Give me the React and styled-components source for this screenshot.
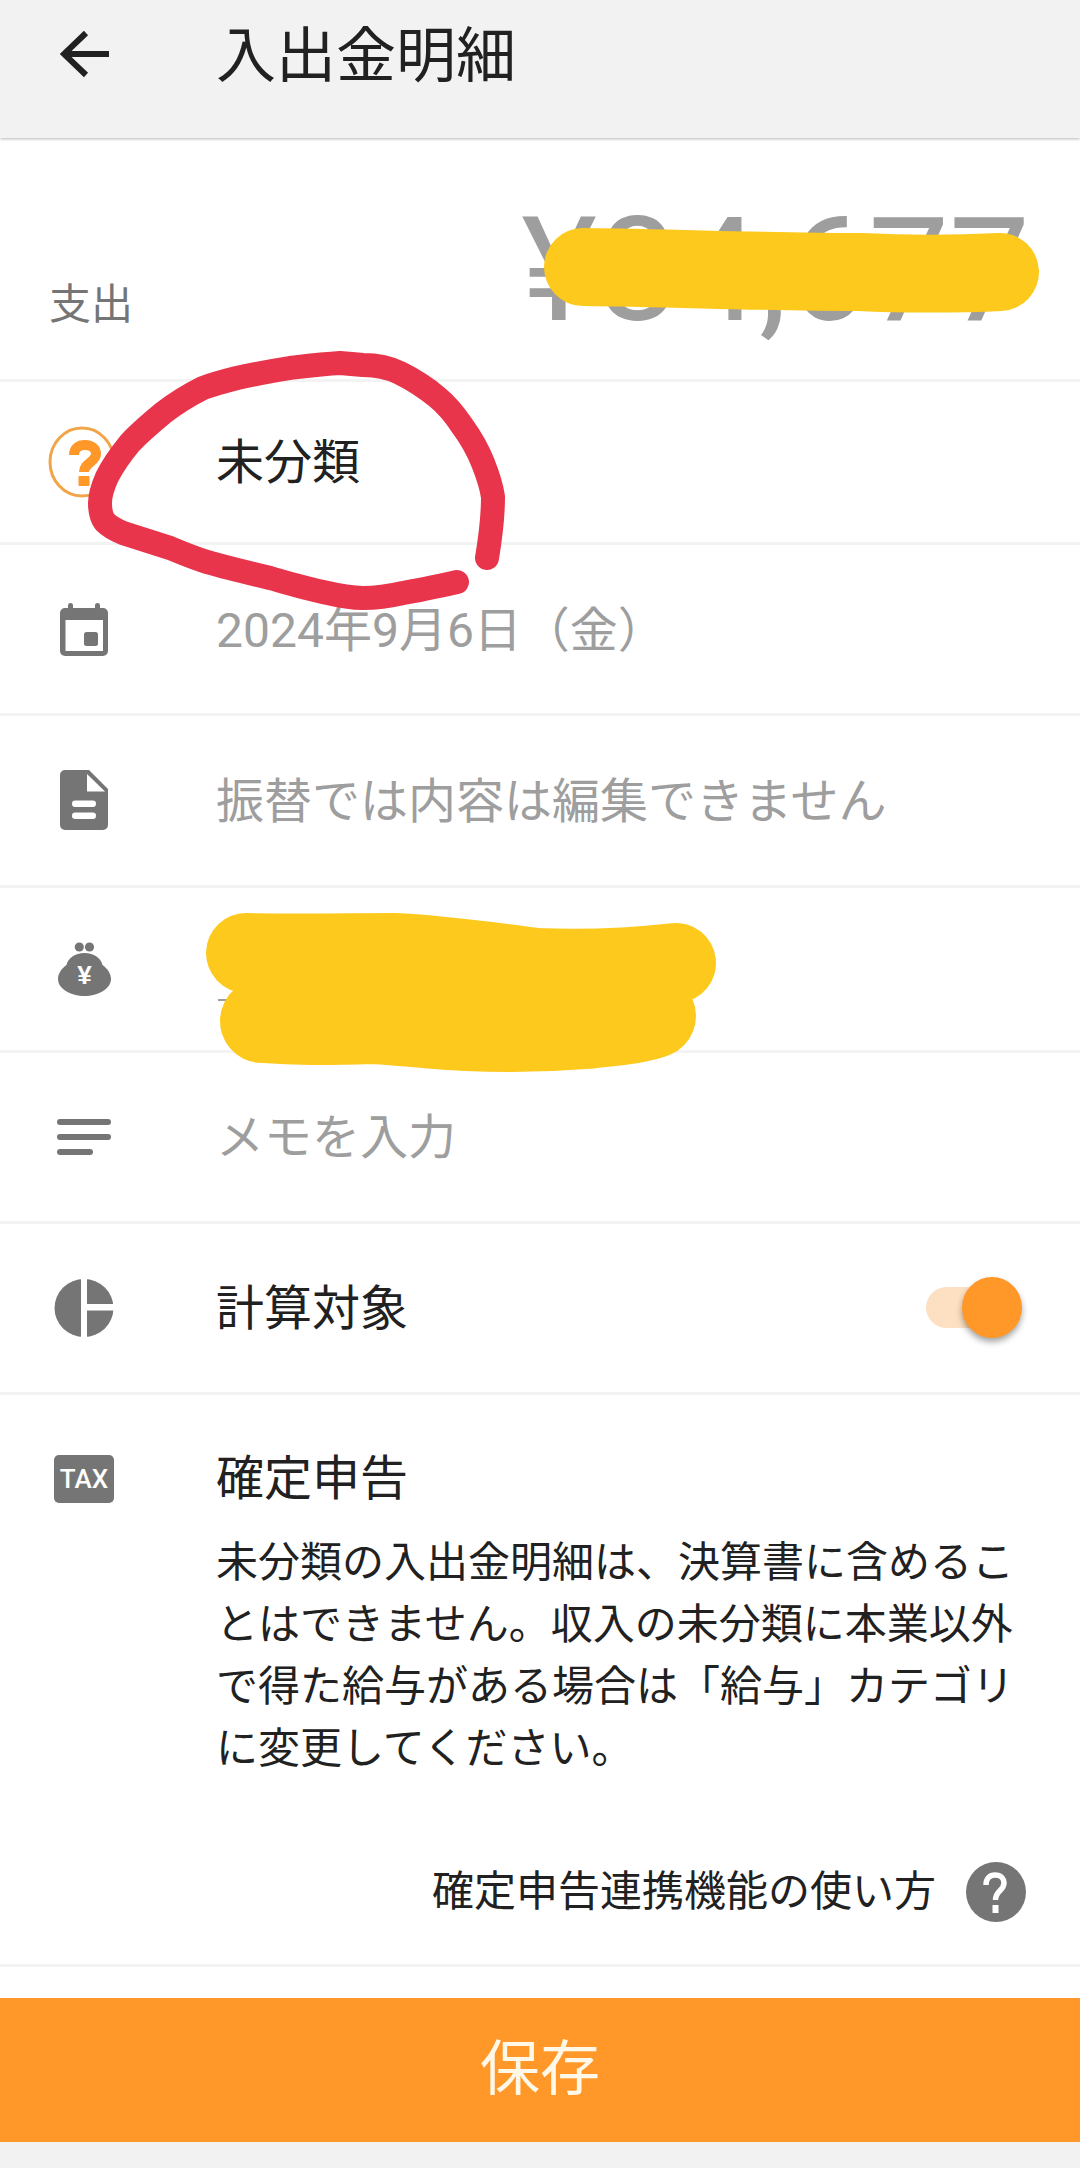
import React from "react";
import styled, { createGlobalStyle } from "styled-components";

const GRAY = "#757575";
const ORANGE = "#ff9828";
const FONT = `Roboto, "Noto Sans CJK JP", sans-serif`;

const Global = createGlobalStyle`
  html, body { margin: 0; padding: 0; background: #f2f2f2; }
  * { box-sizing: border-box; }
`;

const Page = styled.div`
  position: relative;
  width: 1080px;
  height: 2168px;
  overflow: hidden;
  display: flex;
  flex-direction: column;
  background: #f2f2f2;
  font-family: ${FONT};
  text-spacing-trim: space-all;
  color: #212121;
`;

const Header = styled.header`
  position: relative;
  z-index: 1;
  height: 138px;
  flex: none;
  display: flex;
  align-items: flex-start;
  background: #f2f2f2;
  box-shadow: 0 1px 3px rgba(0, 0, 0, 0.28);
`;

const BackSlot = styled.div`
  width: 216px;
  height: 108px;
  padding-left: 60px;
  display: flex;
  align-items: center;
`;

const Title = styled.h1`
  margin: 0;
  font-size: 60px;
  font-weight: 400;
  line-height: 114px;
`;

const Sheet = styled.main`
  height: 2004px;
  flex: none;
  display: flex;
  flex-direction: column;
  background: #fff;
`;

const AmountRow = styled.section`
  height: 243.5px;
  flex: none;
  display: flex;
  justify-content: space-between;
  align-items: flex-end;
  padding: 0 50px 46px 49px;
  border-bottom: 3px solid #f3f3f3;
`;

const AmountLabel = styled.span`
  font-size: 42px;
  line-height: 56px;
  color: ${GRAY};
`;

const Amount = styled.span`
  font-size: 144px;
  line-height: 144px;
  color: #9e9e9e;
  margin-bottom: -10px;
`;

const Row = styled.section`
  height: ${(p) => p.$h}px;
  flex: none;
  display: flex;
  align-items: center;
  border-bottom: 3px solid #f3f3f3;
`;

const IconSlot = styled.div`
  width: 168px;
  margin-right: 48px;
  padding-right: ${(p) => p.$inset || 0}px;
  flex: none;
  display: flex;
  justify-content: center;
  align-items: center;
`;

const RowText = styled.span`
  flex: 1;
  padding-top: 3px;
  font-size: 48px;
  line-height: 64px;
  color: ${(p) => (p.$muted ? "#9e9e9e" : "#212121")};
`;

const Track = styled.span`
  position: relative;
  width: 84px;
  height: 41px;
  margin-right: 70px;
  border-radius: 21px;
  background: #fde0c2;
`;

const Thumb = styled.span`
  position: absolute;
  top: -10px;
  right: -12px;
  width: 60px;
  height: 61px;
  border-radius: 50%;
  background: ${ORANGE};
  box-shadow: 0 4px 6px rgba(0, 0, 0, 0.35);
`;

const TaxRow = styled.section`
  height: 571.5px;
  flex: none;
  display: grid;
  grid-template-columns: 168px 1fr;
  column-gap: 48px;
  padding-top: 52px;
  border-bottom: 3px solid #f3f3f3;
`;

const TaxIconSlot = styled.div`
  display: flex;
  justify-content: center;
  padding-top: 8px;
`;

const TaxBadge = styled.div`
  width: 60px;
  height: 48px;
  border-radius: 5px;
  background: ${GRAY};
  color: #fff;
  font-family: Roboto, sans-serif;
  font-size: 26px;
  font-weight: 500;
  line-height: 48px;
  text-align: center;
`;

const TaxBody = styled.div`
  display: flex;
  flex-direction: column;
`;

const TaxTitle = styled.h2`
  margin: 0;
  font-size: 48px;
  font-weight: 400;
  line-height: 64px;
`;

const TaxNote = styled.p`
  margin: 21px 0 0;
  width: 810px;
  font-size: 42px;
  line-height: 62px;
`;

const HelpLink = styled.div`
  display: flex;
  justify-content: flex-end;
  align-items: center;
  gap: 30px;
  margin-top: 82px;
  padding-right: 54px;
  font-size: 42px;
  line-height: 60px;
`;

const SaveGap = styled.div`
  flex: 1;
`;

const SaveButton = styled.button`
  height: 144px;
  flex: none;
  border: 0;
  padding: 0;
  background: ${ORANGE};
  color: #fff8e8;
  font-family: ${FONT};
  font-size: 60px;
  line-height: 144px;
`;

const Marks = styled.svg`
  position: absolute;
  z-index: 2;
  left: 0;
  top: 0;
  pointer-events: none;
`;

const BackIcon = () => (
  <svg width="50" height="48" viewBox="0 0 50 48" fill="none" stroke="#212121" strokeWidth="6">
    <path d="M49 24H5M26 3L4 24l22 21" />
  </svg>
);

const UnknownIcon = () => (
  <svg width="68" height="72" viewBox="0 0 68 72" fill="none">
    <ellipse cx="34" cy="36" rx="32" ry="34" stroke="#f2a548" strokeWidth="3" />
    <path d="M26 29C26 22 31 19 37 19C44 19 48 23 48 28C48 36 36 37 36 46" stroke={ORANGE} strokeWidth="10" />
    <rect x="30.5" y="50" width="11" height="10" rx="1" fill={ORANGE} />
  </svg>
);

const CalendarIcon = () => (
  <svg width="48" height="53" viewBox="0 0 48 53" fill={GRAY}>
    <rect x="8" y="0" width="5" height="10" rx="2.5" />
    <rect x="35" y="0" width="5" height="10" rx="2.5" />
    <rect x="0" y="5" width="48" height="48" rx="5" />
    <rect x="5.5" y="17" width="37.5" height="31" fill="#fff" />
    <rect x="24" y="29" width="14" height="14" rx="2.5" />
  </svg>
);

const DocIcon = () => (
  <svg width="48" height="60" viewBox="0 0 48 60">
    <path d="M5 0H29L48 19V55a5 5 0 0 1-5 5H5a5 5 0 0 1-5-5V5a5 5 0 0 1 5-5z" fill={GRAY} />
    <path d="M27 4V21.5H45z" fill="#fff" />
    <rect x="12" y="30.5" width="24" height="6.5" rx="3.2" fill="#fff" />
    <rect x="12" y="42.5" width="24" height="6.5" rx="3.2" fill="#fff" />
  </svg>
);

const PurseIcon = () => (
  <svg width="53" height="54" viewBox="0 0 53 54" fill={GRAY}>
    <circle cx="21.3" cy="5" r="4.6" />
    <circle cx="31.5" cy="5" r="4.6" />
    <path d="M26.5 11C36 11 43 16 44.5 23C50 27 53 32 53 37C53 47 40 54 26.5 54C13 54 0 47 0 37C0 32 3 27 8.5 23C10 16 17 11 26.5 11z" />
    <text x="26.5" y="42" textAnchor="middle" fontFamily="Liberation Sans" fontWeight="700" fontSize="26" fill="#fff">¥</text>
  </svg>
);

const LinesIcon = () => (
  <svg width="54" height="36" viewBox="0 0 54 36" fill={GRAY}>
    <rect width="54" height="6" rx="3" />
    <rect y="15" width="54" height="6" rx="3" />
    <rect y="30" width="36" height="6" rx="3" />
  </svg>
);

const PieIcon = () => (
  <svg width="60" height="58" viewBox="0 0 60 58">
    <ellipse cx="30" cy="29" rx="29.5" ry="29" fill={GRAY} />
    <rect x="27" y="-1" width="6" height="60" fill="#fff" />
    <rect x="33" y="25" width="28" height="6.5" fill="#fff" />
  </svg>
);

const HelpIcon = () => (
  <svg width="60" height="60" viewBox="0 0 60 60" fill="none">
    <circle cx="30" cy="30" r="30" fill={GRAY} />
    <path d="M20 23C20 16 24 13 29 13C35 13 38 17 38 21C38 29 29.5 28 29.5 38" stroke="#fff" strokeWidth="5.5" />
    <rect x="26.5" y="43" width="6" height="8" fill="#fff" />
  </svg>
);

const Annotations = () => (
  <Marks width="1080" height="2168" viewBox="0 0 1080 2168" fill="none">
    <g stroke="#e8354c" strokeWidth="24" strokeLinecap="round" strokeLinejoin="round">
      <path d="M487 558C490 540 493 520 493 497C491 483 487 473 483 463C477 448 471 438 463 427C455 415 447 405 437 397C425 387 412 379 400 373C388 367 375 365 363 365L340 363C323 364 307 366 290 368C272 371 255 374 237 378C225 381 214 384 203 388C189 395 176 403 163 413C151 423 140 432 130 443C121 454 113 465 107 477C103 486 100 494 100 503C100 511 101 517 105 522C110 527 116 530 123 533C139 538 154 543 170 548C182 553 194 558 207 562C228 568 249 573 270 578C288 583 305 588 323 592C336 595 350 598 363 598C377 598 390 596 403 593C421 590 439 586 457 582" />
    </g>
    <g stroke="#9e9e9e" strokeWidth="2">
      <path d="M560 931H592M618 928V932M218 1000H228" />
    </g>
    <g stroke="#fdc91c" strokeWidth="78" strokeLinecap="round" strokeLinejoin="round">
      <path d="M583 267C680 268 760 272 860 272C900 274 960 274 1000 272" />
      <path d="M246 953C300 954 350 953 394 953C440 955 490 962 537 968C580 970 630 968 676 963" strokeWidth="80" />
      <path d="M262 1021C300 1024 330 1023 373 1022C410 1024 440 1028 466 1029C510 1031 550 1030 587 1027C610 1024 640 1022 654 1016" strokeWidth="84" />
      <path d="M260 990H650" strokeWidth="70" strokeLinecap="butt" />
    </g>
  </Marks>
);

export default function App() {
  return (
    <Page>
      <Global />
      <Header>
        <BackSlot><BackIcon /></BackSlot>
        <Title>入出金明細</Title>
      </Header>
      <Sheet>
        <AmountRow>
          <AmountLabel>支出</AmountLabel>
          <Amount>¥84,677</Amount>
        </AmountRow>
        <Row $h={163.5}>
          <IconSlot $inset={4}><UnknownIcon /></IconSlot>
          <RowText>未分類</RowText>
        </Row>
        <Row $h={171}>
          <IconSlot><CalendarIcon /></IconSlot>
          <RowText $muted>2024年9月6日（金）</RowText>
        </Row>
        <Row $h={171.5}>
          <IconSlot><DocIcon /></IconSlot>
          <RowText $muted>振替では内容は編集できません</RowText>
        </Row>
        <Row $h={165.5}>
          <IconSlot><PurseIcon /></IconSlot>
        </Row>
        <Row $h={170.5}>
          <IconSlot><LinesIcon /></IconSlot>
          <RowText $muted>メモを入力</RowText>
        </Row>
        <Row $h={171.5}>
          <IconSlot><PieIcon /></IconSlot>
          <RowText>計算対象</RowText>
          <Track><Thumb /></Track>
        </Row>
        <TaxRow>
          <TaxIconSlot><TaxBadge>TAX</TaxBadge></TaxIconSlot>
          <TaxBody>
            <TaxTitle>確定申告</TaxTitle>
            <TaxNote>未分類の入出金明細は、決算書に含めることはできません。収入の未分類に本業以外で得た給与がある場合は「給与」カテゴリに変更してください。</TaxNote>
            <HelpLink>
              <span>確定申告連携機能の使い方</span>
              <HelpIcon />
            </HelpLink>
          </TaxBody>
        </TaxRow>
        <SaveGap />
        <SaveButton>保存</SaveButton>
      </Sheet>
      <Annotations />
    </Page>
  );
}
